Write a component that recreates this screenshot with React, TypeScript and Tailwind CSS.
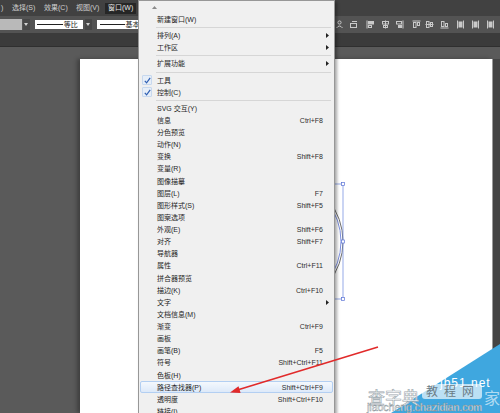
import React from "react";

type Item = { t: string; k?: string; sub?: boolean; check?: boolean; hl?: boolean } | "sep";

const items: Item[] = [
  { t: "新建窗口(W)" },
  "sep",
  { t: "排列(A)", sub: true },
  { t: "工作区", sub: true },
  "sep",
  { t: "扩展功能", sub: true },
  "sep",
  { t: "工具", check: true },
  { t: "控制(C)", check: true },
  "sep",
  { t: "SVG 交互(Y)" },
  { t: "信息", k: "Ctrl+F8" },
  { t: "分色预览" },
  { t: "动作(N)" },
  { t: "变换", k: "Shift+F8" },
  { t: "变量(R)" },
  { t: "图像描摹" },
  { t: "图层(L)", k: "F7" },
  { t: "图形样式(S)", k: "Shift+F5" },
  { t: "图案选项" },
  { t: "外观(E)", k: "Shift+F6" },
  { t: "对齐", k: "Shift+F7" },
  { t: "导航器" },
  { t: "属性", k: "Ctrl+F11" },
  { t: "拼合器预览" },
  { t: "描边(K)", k: "Ctrl+F10" },
  { t: "文字", sub: true },
  { t: "文档信息(M)" },
  { t: "渐变", k: "Ctrl+F9" },
  { t: "画板" },
  { t: "画笔(B)", k: "F5" },
  { t: "符号", k: "Shift+Ctrl+F11" },
  { t: "色板(H)" },
  { t: "路径查找器(P)", k: "Shift+Ctrl+F9", hl: true },
  { t: "透明度", k: "Shift+Ctrl+F10" },
  { t: "链接(I)" },
];

const Chevron = () => (
  <div className="w-[7px] h-[11px] bg-[#474747] flex items-center justify-center">
    <svg width="4" height="3" viewBox="0 0 4 3">
      <path d="M0 0 L4 0 L2 3Z" fill="#d0d0d0" />
    </svg>
  </div>
);

// rough align / distribute glyphs on the control bar
const ToolIcon = ({ kind }: { kind: number }) => (
  <svg width="9" height="9" viewBox="0 0 9 9" fill="none" stroke="#c9c9c9" strokeWidth="1">
    {kind === 0 && (
      <>
        <circle cx="4.5" cy="2.5" r="1.6" />
        <path d="M1.5 8 Q4.5 4 7.5 8" />
      </>
    )}
    {kind === 1 && (
      <>
        <rect x="1.5" y="3.5" width="6" height="4" />
        <path d="M3 1.5 H8" />
      </>
    )}
    {kind === 2 && (
      <>
        <path d="M1 0.5 V8.5" />
        <rect x="2.5" y="1.5" width="5" height="2.5" fill="#c9c9c9" />
        <rect x="2.5" y="5.5" width="3" height="2" />
      </>
    )}
    {kind === 3 && (
      <>
        <path d="M4.5 0.5 V8.5" />
        <rect x="1.5" y="1.5" width="6" height="2.5" />
        <rect x="2.5" y="5.5" width="4" height="2" />
      </>
    )}
    {kind === 4 && (
      <>
        <path d="M8 0.5 V8.5" />
        <rect x="1.5" y="1.5" width="5" height="2.5" />
        <rect x="3.5" y="5.5" width="3" height="2" fill="#c9c9c9" />
      </>
    )}
    {kind === 5 && (
      <>
        <path d="M0.5 1 H8.5" />
        <rect x="1.5" y="2.5" width="2.5" height="5" />
        <rect x="5.5" y="2.5" width="2" height="3" />
      </>
    )}
    {kind === 6 && (
      <>
        <path d="M0.5 4.5 H8.5" />
        <rect x="1.5" y="1.5" width="2.5" height="6" />
        <rect x="5.5" y="2.5" width="2" height="4" />
      </>
    )}
    {kind === 7 && (
      <>
        <path d="M0.5 8 H8.5" />
        <rect x="1.5" y="1.5" width="2.5" height="5" />
        <rect x="5.5" y="3.5" width="2" height="3" />
      </>
    )}
    {kind >= 8 && (
      <>
        <path d="M1.5 0.5 V8.5 M7.5 0.5 V8.5" />
        <rect x="3" y="2" width="3" height="5" fill="#c9c9c9" />
      </>
    )}
  </svg>
);

const iconSlots = [14, 17, 15, 14, 17, 14, 15, 16, 15, 15, 14];

function MenuRow({ it }: { it: Exclude<Item, "sep"> }) {
  return (
    <div
      className={
        it.hl
          ? "flex items-center h-[12.125px] mx-[1px] pl-[1px] pr-[3px] border border-[#b3cff2] rounded-[2px] bg-gradient-to-b from-[#f4f8fd] to-[#dde9f9]"
          : "flex items-center h-[12.125px] pl-[3px] pr-[5px]"
      }
    >
      <div className="w-[15px] h-full flex items-center">
        {it.check && (
          <div className="w-[10px] h-[10px] bg-[#e6eef8] border border-[#c7d8ee] rounded-[1px] flex items-center justify-center">
            <svg width="7" height="7" viewBox="0 0 7 7" fill="none">
              <path d="M0.8 3.8 L2.6 5.8 L6.2 0.9" stroke="#2f5fb3" strokeWidth="1.2" />
            </svg>
          </div>
        )}
      </div>
      <span className="whitespace-nowrap leading-none">{it.t}</span>
      <div className="flex-1" />
      {it.k && <span className="whitespace-nowrap leading-none text-[#2e2e2e]">{it.k}</span>}
      <div className="w-[6px] flex justify-end">
        {it.sub && (
          <svg width="3" height="5" viewBox="0 0 3 5">
            <path d="M0 0 L3 2.5 L0 5Z" fill="#222" />
          </svg>
        )}
      </div>
    </div>
  );
}

function WindowMenu() {
  return (
    <div className="absolute left-[138px] top-0 w-[197px] h-[440px] bg-[#f0f0f0] border border-[#979797] shadow-[2px_2px_3px_rgba(0,0,0,0.35)] text-[7px] text-[#1f1f1f]">
      <div className="h-[12.5px] pl-[13px] flex items-center">
        <svg width="5" height="3" viewBox="0 0 5 3">
          <path d="M0 3 L2.5 0 L5 3Z" fill="#8a8a8a" />
        </svg>
      </div>
      {items.map((it, i) =>
        it === "sep" ? (
          <div key={i} className="h-[4px] flex items-center pl-[17px] pr-[3px]">
            <div className="flex-1 h-px bg-[#d6d6d6]" />
          </div>
        ) : (
          <MenuRow key={i} it={it} />
        )
      )}
    </div>
  );
}

export default function App() {
  return (
    <div className="relative w-[500px] h-[413px] overflow-hidden flex flex-col bg-[#5a5a5a] font-['Liberation_Sans','Noto_Sans_CJK_SC',sans-serif] text-[7px]">
      {/* menu bar */}
      <div className="h-[16px] bg-[#414141] flex items-center text-[#cfcfcf] shrink-0">
        <span className="w-[12px] pl-[1px]">)</span>
        <span className="w-[32px]">选择(S)</span>
        <span className="w-[32px]">效果(C)</span>
        <span className="w-[29px]">视图(V)</span>
        <span className="h-[11px] flex items-center px-[3px] bg-[#262626] text-[#e6e6e6]">窗口(W)</span>
      </div>

      {/* control bar */}
      <div className="h-[17px] bg-[#535353] flex items-center shrink-0">
        <div className="w-[22px] h-[11px] bg-[#b9b9b9]" />
        <div className="ml-[1px]">
          <Chevron />
        </div>
        <div className="ml-[5px] w-[48px] h-[9px] bg-white flex items-center pl-[2px] gap-[1px] text-[#222]">
          <div className="w-[26px] h-px bg-[#222]" />
          <span className="leading-none">等比</span>
        </div>
        <div className="ml-[2px]">
          <Chevron />
        </div>
        <div className="ml-[5px] w-[48px] h-[9px] bg-white flex items-center pl-[3px] gap-[1px] text-[#222]">
          <div className="w-[25px] h-px bg-[#222]" />
          <span className="leading-none">基本</span>
        </div>
        <div className="w-[192px]" />
        {iconSlots.map((w, i) => (
          <div key={i} className="h-[11px] flex items-center" style={{ width: w }}>
            <ToolIcon kind={i} />
          </div>
        ))}
      </div>

      {/* document tab strip */}
      <div className="h-[14px] bg-[#3b3b3b] border-b border-[#2f2f2f] shrink-0" />

      {/* canvas */}
      <div className="flex-1 flex pt-[12px] bg-[#5a5a5a]">
        <div className="w-[80px]" />
        <div className="w-[413px] bg-white border-r border-[#9a9a9a] shadow-[-3px_0_4px_rgba(0,0,0,0.3)]" />
        <div className="flex-1 bg-[#444444]" />
      </div>

      {/* selected ellipse on the artboard */}
      <svg className="absolute left-0 top-0" width="500" height="413" viewBox="0 0 500 413">
        <ellipse cx="294" cy="241.5" rx="49" ry="57.5" fill="none" stroke="#6d6d6d" strokeWidth="1" />
        <ellipse cx="293" cy="241.5" rx="48" ry="56" fill="none" stroke="#5a72d6" strokeWidth="0.8" />
        <rect x="240" y="184" width="103" height="115" fill="none" stroke="#7a94e2" strokeWidth="0.8" />
        <rect x="341.5" y="182.5" width="3" height="3" fill="#fff" stroke="#5a72d6" strokeWidth="0.7" />
        <rect x="341.5" y="240" width="3" height="3" fill="#fff" stroke="#5a72d6" strokeWidth="0.7" />
        <rect x="341.5" y="297.5" width="3" height="3" fill="#fff" stroke="#5a72d6" strokeWidth="0.7" />
      </svg>

      <WindowMenu />

      {/* red pointer arrow + site watermark */}
      <svg className="absolute left-0 top-0" width="500" height="413" viewBox="0 0 500 413">
        <line x1="378" y1="347" x2="239" y2="389.5" stroke="#e12a2a" strokeWidth="1.6" />
        <path d="M230 392.5 L240.6 392.9 L238.5 386.2Z" fill="#e12a2a" />
        <path d="M391 413 L500 344 L500 413Z" fill="#3fa7df" />
        <text x="440" y="387" fill="#ffffff" fontSize="12" letterSpacing="1" fontFamily="Liberation Sans, sans-serif">jb51.net</text>
        <text x="368" y="404" fill="#ffffff" fillOpacity="0.85" stroke="#9aa6ad" strokeWidth="0.6" fontSize="17" fontFamily="Noto Sans CJK SC, sans-serif">查字典</text>
        <rect x="422" y="384" width="60" height="15" rx="3" fill="#ffffff" fillOpacity="0.65" />
        <text x="426" y="396" fill="#6b7c86" fontSize="12" letterSpacing="6" fontFamily="Noto Sans CJK SC, sans-serif">教程网</text>
        <text x="484" y="404" fill="#ffffff" fillOpacity="0.6" fontSize="16" fontFamily="Noto Sans CJK SC, sans-serif">家</text>
        <text x="367" y="411" fill="#ffffff" stroke="#7d8a91" strokeWidth="0.4" fontSize="10.5" fontFamily="Liberation Sans, sans-serif">jiaocheng.chazidian.com</text>
      </svg>
    </div>
  );
}
